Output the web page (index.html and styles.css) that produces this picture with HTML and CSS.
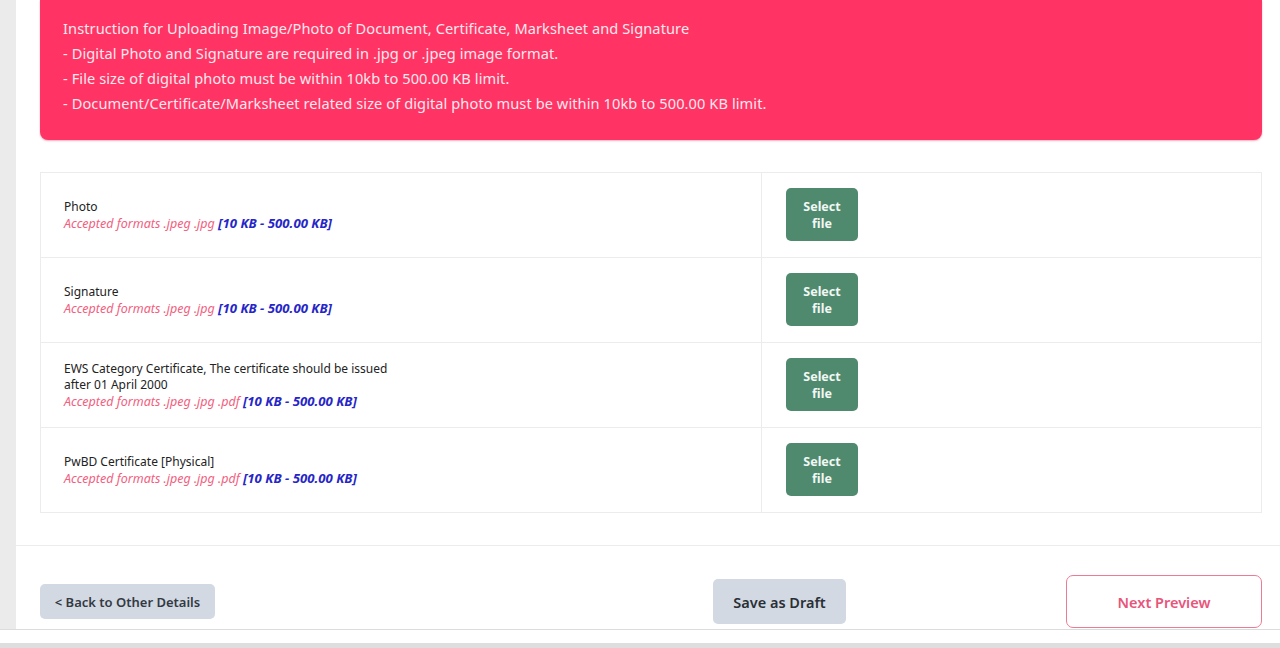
FILE: index.html
```html
<!DOCTYPE html>
<html>
<head>
<meta charset="utf-8">
<link rel="stylesheet" href="styles.css">
</head>
<body>
<div class="page">
  <div class="side"></div>
  <div class="main">
    <div class="notice">
      <p>Instruction for Uploading Image/Photo of Document, Certificate, Marksheet and Signature</p>
      <p>- Digital Photo and Signature are required in .jpg or .jpeg image format.</p>
      <p>- File size of digital photo must be within 10kb to 500.00 KB limit.</p>
      <p>- Document/Certificate/Marksheet related size of digital photo must be within 10kb to 500.00 KB limit.</p>
    </div>

    <div class="uploads">
      <div class="row">
        <div class="label">
          <div class="name">Photo</div>
          <div class="fmt"><span class="ext">Accepted formats .jpeg .jpg</span> <span class="size">[10 KB - 500.00 KB]</span></div>
        </div>
        <div class="action"><button class="select">Select<br>file</button></div>
      </div>
      <div class="row">
        <div class="label">
          <div class="name">Signature</div>
          <div class="fmt"><span class="ext">Accepted formats .jpeg .jpg</span> <span class="size">[10 KB - 500.00 KB]</span></div>
        </div>
        <div class="action"><button class="select">Select<br>file</button></div>
      </div>
      <div class="row">
        <div class="label">
          <div class="name">EWS Category Certificate, The certificate should be issued<br>after 01 April 2000</div>
          <div class="fmt"><span class="ext">Accepted formats .jpeg .jpg .pdf</span> <span class="size">[10 KB - 500.00 KB]</span></div>
        </div>
        <div class="action"><button class="select">Select<br>file</button></div>
      </div>
      <div class="row">
        <div class="label">
          <div class="name">PwBD Certificate [Physical]</div>
          <div class="fmt"><span class="ext">Accepted formats .jpeg .jpg .pdf</span> <span class="size">[10 KB - 500.00 KB]</span></div>
        </div>
        <div class="action"><button class="select">Select<br>file</button></div>
      </div>
    </div>

    <div class="divider"></div>

    <div class="actions">
      <button class="btn back">&lt; Back to Other Details</button>
      <button class="btn draft">Save as Draft</button>
      <button class="btn next">Next Preview</button>
    </div>
  </div>
</div>
<div class="gap"></div>
<div class="bottombar"></div>
</body>
</html>
```

FILE: styles.css
```css
* { box-sizing: border-box; }
html, body { margin: 0; padding: 0; }
body {
  background: #ffffff;
  font-family: "Noto Sans", "Open Sans", sans-serif;
  color: #222;
  height: 648px;
  overflow: hidden;
}
.page {
  display: flex;
  height: 630px;
  border-bottom: 1px solid #dcdcdc;
}
.side {
  width: 16px;
  background: #ebebeb;
  flex: none;
}
.main {
  flex: 1;
  padding: 0 18px 0 24px;
  background: #fff;
}
.notice {
  background: #ff3464;
  border-radius: 0 0 8px 8px;
  height: 140px;
  padding: 16px 23px 0;
  color: #fde8ee;
  font-size: 14.6px;
  letter-spacing: 0.08px;
  box-shadow: 0 1px 2px rgba(180, 30, 70, 0.35);
}
.notice p {
  margin: 0;
  line-height: 25px;
  white-space: nowrap;
}
.uploads {
  margin-top: 32px;
  border: 1px solid #ececec;
}
.row {
  display: flex;
  border-top: 1px solid #ececec;
}
.row:first-child { border-top: none; }
.label {
  width: 721px;
  padding: 0 24px 0 23px;
  display: flex;
  flex-direction: column;
  justify-content: center;
  font-size: 12px;
  line-height: 16px;
  border-right: 1px solid #ececec;
}
.name { color: #222; }
.fmt { font-style: italic; font-size: 12.5px; white-space: nowrap; }
.ext { color: #f2607e; }
.size { color: #2626c8; font-weight: 700; font-size: 13.2px; }
.action {
  flex: 1;
  padding: 15px 24px 16px;
}
.select {
  display: block;
  width: 72px;
  height: 53px;
  border: none;
  border-radius: 5px;
  background: #4f8a6f;
  color: #f2f7f4;
  font-family: inherit;
  font-weight: 700;
  font-size: 12.5px;
  line-height: 17px;
  padding: 0;
}
.divider {
  margin: 32px -18px 0 -24px;
  border-top: 1px solid #ececec;
}
.actions {
  display: flex;
  align-items: center;
  padding-top: 29px;
}
.btn {
  font-family: inherit;
  border-radius: 5px;
  padding: 0;
  font-weight: 600;
}
.back {
  width: 175px;
  height: 35px;
  border: none;
  background: #d3d9e2;
  color: #333a44;
  font-size: 13px;
}
.draft {
  width: 133px;
  height: 45px;
  border: none;
  background: #d3d9e2;
  color: #2a2f36;
  font-size: 14.5px;
  margin-left: 498px;
}
.next {
  width: 196px;
  height: 53px;
  margin-left: auto;
  background: #fff;
  border: 1px solid #ec7c95;
  border-radius: 7px;
  color: #e8557b;
  font-size: 14.5px;
}
.gap { height: 13px; }
.bottombar {
  height: 5px;
  background: #dedede;
}
```
